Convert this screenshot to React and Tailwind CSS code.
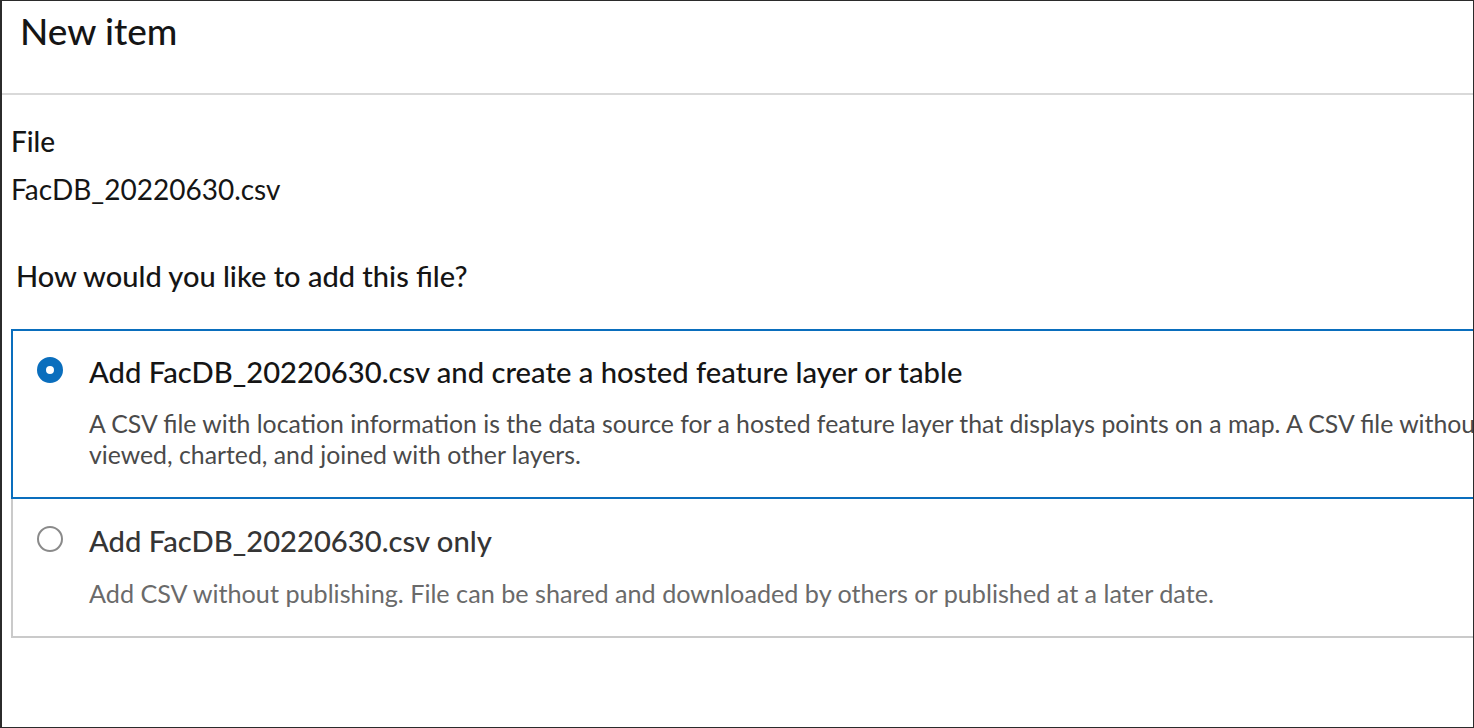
export default function App() {
  return (
    <div className="w-[1474px] h-[728px] box-border border border-l-2 border-[#2b2b2b] bg-white overflow-hidden font-['Lato',sans-serif] text-[#151515]">
      <div className="h-[94px] box-border border-b-2 border-[#d9d9d9] pl-[18px] pt-[11px]">
        <h1 className="text-[37px] leading-[37px] font-medium">New item</h1>
      </div>
      <div className="pt-[30px] pl-[9px]">
        <div className="text-[28px] leading-[32px] font-medium">File</div>
        <div className="mt-[15px] text-[28px] leading-[34px]">FacDB_20220630.csv</div>
        <div className="mt-[52px] pl-[5px] text-[29px] leading-[36px] font-medium">How would you like to add this file?</div>
        <div className="mt-[35px] w-[1600px]">
          <div className="border-2 border-[#0a6ebd] pl-[24px] pt-[23px] pb-[27px] flex">
            <div className="mt-[3px] w-[26px] h-[26px] rounded-full border-[9px] border-[#0a6ebd] bg-white shrink-0" />
            <div className="ml-[26px]">
              <div className="text-[29.2px] leading-[36px] font-medium text-[#151515]">Add FacDB_20220630.csv and create a hosted feature layer or table</div>
              <div className="mt-[18px] text-[24.8px] leading-[31px] text-[#4a4a4a] whitespace-nowrap">
                <div>A CSV file with location information is the data source for a hosted feature layer that displays points on a map. A CSV file without location information can be</div>
                <div>viewed, charted, and joined with other layers.</div>
              </div>
            </div>
          </div>
          <div className="border-2 border-t-0 border-[#cacaca] pl-[24px] pt-[24px] pb-[27px] flex">
            <div className="mt-[3px] w-[26px] h-[26px] rounded-full border-2 border-[#8a8a8a] bg-white shrink-0" />
            <div className="ml-[26px]">
              <div className="text-[29.2px] leading-[36px] font-medium text-[#353535]">Add FacDB_20220630.csv only</div>
              <div className="mt-[19px] text-[25.2px] leading-[31px] text-[#6a6a6a]">Add CSV without publishing. File can be shared and downloaded by others or published at a later date.</div>
            </div>
          </div>
        </div>
      </div>
    </div>
  );
}
